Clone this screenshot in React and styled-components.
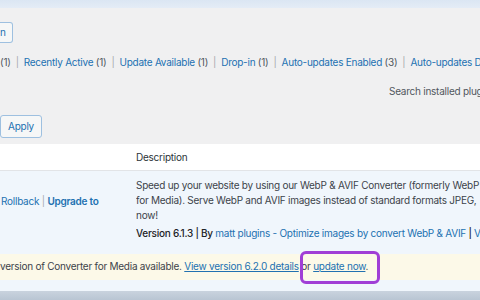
import styled, { createGlobalStyle } from "styled-components";

const GlobalStyle = createGlobalStyle`
	html, body {
		margin: 0;
		padding: 0;
		background: #f0f0f1;
	}
	body {
		font-family: Inter, "Noto Sans", "DejaVu Sans", sans-serif;
		font-size: 10px;
		line-height: 15px;
		letter-spacing: -0.25px;
		color: #3c434a;
	}
`;

const Page = styled.div`
	width: 480px;
	height: 300px;
	overflow: hidden;
	position: relative;
	display: flex;
	flex-direction: column;
`;

const TopStrip = styled.div`
	height: 8px;
	flex: none;
	background: linear-gradient(180deg, #dbe6f3, #e4ecf6);
`;

const Toolbar = styled.div`
	display: flex;
	flex-direction: column;
	align-items: flex-start;
`;

const Button = styled.button`
	font: inherit;
	letter-spacing: inherit;
	color: #2271b1;
	background: #f6f7f7;
	border: 1px solid #9ec0e0;
	border-radius: 3px;
	padding: 0 ${(p) => (p.$cut ? "6px" : "7px")};
	height: ${(p) => p.$h}px;
	line-height: ${(p) => p.$h - 2}px;
	margin-top: ${(p) => p.$top}px;
	${(p) =>
		p.$cut &&
		`border-left: none; border-top-left-radius: 0; border-bottom-left-radius: 0; padding-left: 0;`}
`;

const Filters = styled.div`
	display: flex;
	align-items: center;
	margin-top: 12px;
	white-space: nowrap;
	color: #50575e;
`;

const Filter = styled.span`
	a {
		color: #2271b1;
		text-decoration: none;
	}
`;

const Sep = styled.span`
	color: #a7aaad;
	margin: 0 5px;
`;

const SearchRow = styled.div`
	align-self: stretch;
	display: flex;
	justify-content: flex-end;
	margin-top: 14px;
	padding-left: 389px;
	white-space: nowrap;
	overflow: hidden;
`;

const SearchHint = styled.span`
	color: #50575e;
	flex: none;
	width: 91px;
	overflow: hidden;
`;

const Table = styled.div`
	margin-top: 6px;
	display: flex;
	flex-direction: column;
`;

const HeadRow = styled.div`
	height: 26px;
	background: #fff;
	border-bottom: 1px solid #e2e4e7;
	display: grid;
	grid-template-columns: 136px 1fr;
	align-items: center;
	color: #2c3338;
`;

const PluginRow = styled.div`
	background: #f0f6fc;
	display: grid;
	grid-template-columns: 136px 1fr;
	padding: 7px 0 8px;
	height: 80px;
	box-sizing: border-box;
	white-space: nowrap;
`;

const Actions = styled.div`
	padding: 16px 0 0 1px;
	color: #a7aaad;
	a {
		color: #2271b1;
		text-decoration: none;
	}
	b {
		font-weight: 600;
	}
`;

const Desc = styled.div`
	overflow: hidden;
	p {
		margin: 0;
	}
`;

const Meta = styled.p`
	&& {
		margin-top: 3px;
	}
	color: #1d2327;
	font-weight: 500;
	a {
		color: #2271b1;
		text-decoration: none;
		font-weight: 400;
	}
`;

const UpdateRow = styled.div`
	background: #f0f6fc;
	padding: 3px 0 11px;
	height: 40px;
	box-sizing: border-box;
`;

const Notice = styled.div`
	position: relative;
	background: #fcf9e8;
	height: 26px;
	line-height: 24px;
	white-space: nowrap;
	color: #3c434a;
	a {
		color: #2271b1;
		text-decoration: underline;
	}
`;

const Highlight = styled.span`
	position: absolute;
	left: 300px;
	top: -3px;
	width: 80px;
	height: 33px;
	box-sizing: border-box;
	border: 3px solid #a03ed6;
	border-radius: 6px;
`;

const BottomShade = styled.div`
	flex: 1;
	background: linear-gradient(180deg, #c9d3de, #b9c5d3);
`;

export default function App() {
	return (
		<>
			<GlobalStyle />
			<Page>
				<TopStrip />
				<Toolbar>
					<Button $cut $h={21} $top={14}>
						n
					</Button>
					<Filters>
						<Filter>(1)</Filter>
						<Sep>|</Sep>
						<Filter>
							<a>Recently Active</a> (1)
						</Filter>
						<Sep>|</Sep>
						<Filter>
							<a>Update Available</a> (1)
						</Filter>
						<Sep>|</Sep>
						<Filter>
							<a>Drop-in</a> (1)
						</Filter>
						<Sep>|</Sep>
						<Filter>
							<a>Auto-updates Enabled</a> (3)
						</Filter>
						<Sep>|</Sep>
						<Filter>
							<a>Auto-updates Disabled</a> (3)
						</Filter>
					</Filters>
					<SearchRow>
						<SearchHint>Search installed plugins...</SearchHint>
					</SearchRow>
					<Button $h={23} $top={16}>
						Apply
					</Button>
				</Toolbar>
				<Table>
					<HeadRow>
						<span />
						<span>Description</span>
					</HeadRow>
					<PluginRow>
						<Actions>
							<a>Rollback</a> | <a><b>Upgrade to</b></a>
						</Actions>
						<Desc>
							<p>Speed up your website by using our WebP &amp; AVIF Converter (formerly WebP</p>
							<p>for Media). Serve WebP and AVIF images instead of standard formats JPEG,</p>
							<p>now!</p>
							<Meta>
								Version 6.1.3 | By{" "}
								<a>matt plugins - Optimize images by convert WebP &amp; AVIF</a> |{" "}
								<a>View details</a>
							</Meta>
						</Desc>
					</PluginRow>
					<UpdateRow>
						<Notice>
							version of Converter for Media available. <a>View version 6.2.0 details</a> or{" "}
							<a>update now</a>.
							<Highlight />
						</Notice>
					</UpdateRow>
				</Table>
				<BottomShade />
			</Page>
		</>
	);
}
